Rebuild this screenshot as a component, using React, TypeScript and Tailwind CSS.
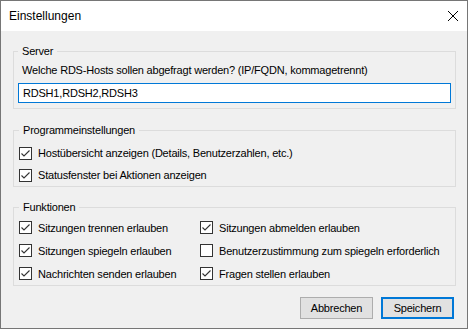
import { ReactNode } from 'react';

function CheckBox({ checked }: { checked: boolean }) {
  return (
    <svg width="13" height="13" viewBox="0 0 13 13" className="shrink-0">
      <rect x="0.5" y="0.5" width="12" height="12" fill="#ffffff" stroke="#333333" />
      {checked ? <path d="M2.5 6.5 L5 9 L10.5 3.5" fill="none" stroke="#333333" strokeWidth="1.1" /> : null}
    </svg>
  );
}

function CheckRow({ label, checked = true, className = 'h-[23px]' }: { label: string; checked?: boolean; className?: string }) {
  return (
    <div className={`flex items-center gap-[6px] ${className}`}>
      <CheckBox checked={checked} />
      <span>{label}</span>
    </div>
  );
}

function GroupBox({ title, children, className = '' }: { title: string; children: ReactNode; className?: string }) {
  return (
    <fieldset className={`border border-[#dcdcdc] ${className}`}>
      <legend className="px-[4px] leading-[14px]">{title}</legend>
      {children}
    </fieldset>
  );
}

export default function App() {
  return (
    <div className="flex h-[329px] w-[468px] flex-col border border-[#767676] bg-[#f0f0f0] text-[11px] leading-[14px] tracking-[-0.2px] text-black [font-family:'Liberation_Sans',Arial,sans-serif]">
      <div className="flex h-[30px] shrink-0 items-center justify-between bg-white pl-[8px] pr-[9px]">
        <span className="text-[12px] tracking-normal">Einstellungen</span>
        <svg width="10" height="10" viewBox="0 0 10 10">
          <path d="M0 0 L10 10 M10 0 L0 10" stroke="#000000" strokeWidth="1" />
        </svg>
      </div>

      <div className="flex flex-1 flex-col pl-[12px] pr-[11px] pt-[13px]">
        <GroupBox title="Server" className="px-[4px] pb-[5px]">
          <div className="ml-[4px] mt-[5px]">Welche RDS-Hosts sollen abgefragt werden? (IP/FQDN, kommagetrennt)</div>
          <div className="mt-[6px] flex h-[20px] items-center border border-[#0078d7] bg-white px-[4px]">RDSH1,RDSH2,RDSH3</div>
        </GroupBox>

        <GroupBox title="Programmeinstellungen" className="mt-[14px] px-[5px] pt-[5px]">
          <CheckRow label="Hostübersicht anzeigen (Details, Benutzerzahlen, etc.)" className="h-[22px]" />
          <CheckRow label="Statusfenster bei Aktionen anzeigen" className="h-[22px]" />
        </GroupBox>

        <GroupBox title="Funktionen" className="mt-[13px] px-[5px] pt-[2px]">
          <div className="grid grid-cols-[181px_1fr]">
            <CheckRow label="Sitzungen trennen erlauben" />
            <CheckRow label="Sitzungen abmelden erlauben" />
            <CheckRow label="Sitzungen spiegeln erlauben" />
            <CheckRow label="Benutzerzustimmung zum spiegeln erforderlich" checked={false} />
            <CheckRow label="Nachrichten senden erlauben" />
            <CheckRow label="Fragen stellen erlauben" />
          </div>
        </GroupBox>

        <div className="mr-[2px] mt-[11px] flex justify-end gap-[8px]">
          <button className="flex h-[22px] w-[73px] items-center justify-center border border-[#adadad] bg-[#e1e1e1]">Abbrechen</button>
          <button className="flex h-[22px] w-[73px] items-center justify-center border-2 border-[#0078d7] bg-[#e1e1e1]">Speichern</button>
        </div>
      </div>
    </div>
  );
}
